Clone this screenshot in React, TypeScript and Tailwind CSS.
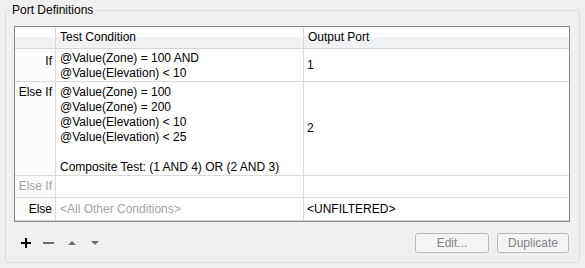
import React from "react";

type Row = {
  label: string;
  disabled?: boolean;
  lines: string[];
  port: string;
  portMuted?: boolean;
  height: string;
  labelPad: string;
  textPad: string;
};

const rows: Row[] = [
  {
    label: "If",
    lines: ["@Value(Zone) = 100 AND", "@Value(Elevation) < 10"],
    port: "1",
    height: "h-[33px]",
    labelPad: "pt-[5px]",
    textPad: "pt-[2px]",
  },
  {
    label: "Else If",
    lines: [
      "@Value(Zone) = 100",
      "@Value(Zone) = 200",
      "@Value(Elevation) < 10",
      "@Value(Elevation) < 25",
      "\u00a0",
      "Composite Test: (1 AND 4) OR (2 AND 3)",
    ],
    port: "2",
    height: "h-[94px]",
    labelPad: "pt-[3px]",
    textPad: "pt-[3px]",
  },
  {
    label: "Else If",
    disabled: true,
    lines: [],
    port: "",
    height: "h-[22px]",
    labelPad: "pt-[3px]",
    textPad: "pt-[3px]",
  },
  {
    label: "Else",
    lines: ["<All Other Conditions>"],
    port: "<UNFILTERED>",
    height: "h-[23px]",
    labelPad: "pt-[4px]",
    textPad: "pt-[4px]",
  },
];

function PlusIcon() {
  return (
    <svg width="10" height="10" viewBox="0 0 10 10">
      <rect x="4" y="0" width="2" height="10" fill="#000" />
      <rect x="0" y="4" width="10" height="2" fill="#000" />
    </svg>
  );
}

function MinusIcon() {
  return (
    <svg width="11" height="10" viewBox="0 0 11 10">
      <rect x="0" y="4" width="11" height="2" fill="#6b6b6b" />
    </svg>
  );
}

function Arrow({ up }: { up?: boolean }) {
  return (
    <svg width="8" height="10" viewBox="0 0 8 10">
      {up ? (
        <polygon points="4,3 8,7 0,7" fill="#6b6b6b" />
      ) : (
        <polygon points="0,3 8,3 4,7" fill="#6b6b6b" />
      )}
    </svg>
  );
}

export default function App() {
  return (
    <div
      className="w-[585px] h-[268px] bg-[#f0f0f0] pt-[2px] px-[5px] text-[12px] leading-[15px] text-black"
      style={{ fontFamily: '"Liberation Sans", Arial, sans-serif' }}
    >
      <fieldset className="h-[261px] rounded-[3px] border border-[#d5dfe5] p-0">
        <legend className="ml-[5px] px-[1px] leading-[16px]">Port Definitions</legend>

        <div className="px-[8px] pt-[8px]">
          {/* table */}
          <div className="border border-[#828790] bg-white h-[196px] w-[556px]">
            <div className="flex h-[22px] border-b border-[#d5d5d5] bg-[linear-gradient(#ffffff_0%,#ffffff_45%,#f1f2f4_50%,#f1f2f4_100%)]">
              <div className="w-[41px] border-r border-[#d5d5d5]" />
              <div className="w-[248px] border-r border-[#d5d5d5] pl-[4px] flex items-center">
                Test Condition
              </div>
              <div className="flex-1 pl-[4px] flex items-center">Output Port</div>
            </div>

            {rows.map((r, i) => (
              <div key={i} className={`flex ${r.height} border-b border-[#dadada]`}>
                <div
                  className={`w-[41px] border-r border-[#dadada] bg-[#fbfbfb] text-right pr-[3px] ${r.labelPad} ${
                    r.disabled ? "text-[#a3a3a3]" : ""
                  }`}
                >
                  {r.label}
                </div>
                <div
                  className={`w-[248px] border-r border-[#dadada] pl-[4px] whitespace-nowrap ${r.textPad} ${
                    r.label === "Else" ? "text-[#a3a3a3]" : ""
                  }`}
                >
                  {r.lines.map((l, j) => (
                    <div key={j}>{l}</div>
                  ))}
                </div>
                <div className="flex-1 pl-[3px] flex items-center">{r.port}</div>
              </div>
            ))}
          </div>

          {/* toolbar */}
          <div className="mt-[11px] flex items-center h-[20px]">
            <button className="w-[23px] flex justify-center">
              <PlusIcon />
            </button>
            <button className="w-[23px] flex justify-center">
              <MinusIcon />
            </button>
            <button className="w-[23px] flex justify-center">
              <Arrow up />
            </button>
            <button className="w-[23px] flex justify-center">
              <Arrow />
            </button>
            <div className="flex-1" />
            <button className="w-[74px] h-[20px] rounded-[3px] border border-[#b8bbbe] bg-[#f4f4f4] text-[#838383]">
              Edit...
            </button>
            <button className="ml-[8px] mr-[2px] w-[72px] h-[20px] rounded-[3px] border border-[#b8bbbe] bg-[#f4f4f4] text-[#838383]">
              Duplicate
            </button>
          </div>
        </div>
      </fieldset>
    </div>
  );
}
